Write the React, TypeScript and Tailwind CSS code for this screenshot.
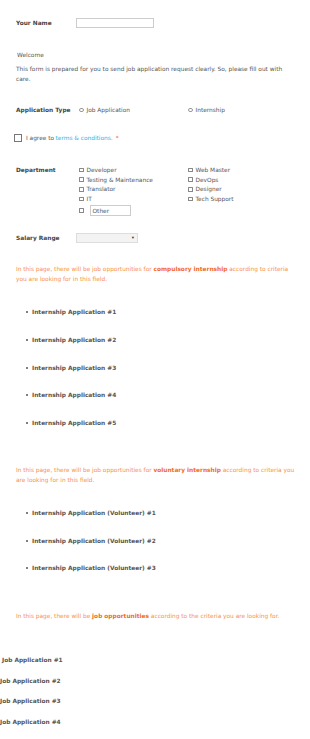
import React from "react";

const Cb = () => (
  <span className="inline-block w-[4.5px] h-[4.5px] border-[0.6px] border-[#888] rounded-[0.5px] mr-[3px] shrink-0" />
);
const Radio = () => (
  <span className="inline-block w-[4.5px] h-[4.5px] border-[0.6px] border-[#999] rounded-full mr-[3px] shrink-0" />
);

export default function App() {
  const depLeft = ["Developer", "Testing & Maintenance", "Translator", "IT"];
  const depRight = ["Web Master", "DevOps", "Designer", "Tech Support"];
  return (
    <div
      className="bg-white w-[310px] min-h-[739px] text-[5.85px] leading-[10px] text-[#555]"
      style={{ fontFamily: '"DejaVu Sans", Verdana, sans-serif' }}
    >
      <div className="pl-4 pt-[18px]">
        <div className="flex items-center h-[10px]">
          <div className="w-[60px] font-bold text-[#444]">Your Name</div>
          <div className="w-[78px] h-[10px] border-[0.6px] border-[#ccc] bg-white" />
        </div>

        <div className="mt-[22px] pl-[1px]">Welcome</div>
        <div className="mt-[4px] pr-3">
          This form is prepared for you to send job application request clearly. So, please fill out with care.
        </div>

        <div className="mt-[21px] flex items-center h-[10px]">
          <div className="w-[63px] font-bold text-[#444]">Application Type</div>
          <div className="w-[109px] flex items-center"><Radio />Job Application</div>
          <div className="flex items-center"><Radio />Internship</div>
        </div>

        <div className="mt-[18px] flex items-center h-[10px] -ml-[2px]">
          <span className="inline-block w-[8px] h-[8px] border-[0.7px] border-[#777] mr-[4px]" />
          <span>I agree to </span>
          <span className="text-[#29b3ea] ml-[1.5px]">terms &amp; conditions.</span>
          <span className="text-[#e53935] ml-[3px]">*</span>
        </div>

        <div className="mt-[22px] flex">
          <div className="w-[63px] font-bold text-[#444] leading-[10px]">Department</div>
          <div className="w-[109px]">
            {depLeft.map((d) => (
              <div key={d} className="flex items-center h-[9.75px]"><Cb />{d}</div>
            ))}
            <div className="flex items-center h-[11px] mt-[1px]">
              <Cb />
              <div className="ml-[3px] w-[41px] h-[11px] border-[0.6px] border-[#ccc] flex items-center pl-[2px]">Other</div>
            </div>
          </div>
          <div>
            {depRight.map((d) => (
              <div key={d} className="flex items-center h-[9.75px]"><Cb />{d}</div>
            ))}
          </div>
        </div>

        <div className="mt-[17px] flex items-center h-[10px]">
          <div className="w-[60px] font-bold text-[#444]">Salary Range</div>
          <div className="w-[62px] h-[10px] border-[0.6px] border-[#ddd] bg-[#f3f3f3] flex items-center justify-end pr-[3px] text-[#333] text-[4.5px]">▾</div>
        </div>

        <div className="mt-[21px] text-[#f7904a] pr-3">
          In this page, there will be job opportunities for <b className="text-[#f26b1d]">compulsory internship</b> according to criteria you are looking for in this field.
        </div>

        <ul className="mt-[23px] pl-[10px] flex flex-col gap-[17.75px] font-bold text-[#555]">
          {[1, 2, 3, 4, 5].map((n) => (
            <li key={n} className="flex items-center h-[10px]">
              <span className="inline-block w-[2px] h-[2px] rounded-full bg-[#555] mr-[4px]" />
              Internship Application #{n}
            </li>
          ))}
        </ul>

        <div className="mt-[37px] text-[#f7904a] pr-3">
          In this page, there will be job opportunities for <b className="text-[#f26b1d]">voluntary internship</b> according to criteria you are looking for in this field.
        </div>

        <ul className="mt-[23px] pl-[10px] flex flex-col gap-[17.5px] font-bold text-[#555]">
          {[1, 2, 3].map((n) => (
            <li key={n} className="flex items-center h-[10px]">
              <span className="inline-block w-[2px] h-[2px] rounded-full bg-[#555] mr-[4px]" />
              Internship Application (Volunteer) #{n}
            </li>
          ))}
        </ul>

        <div className="mt-[38px] text-[#f7904a]">
          In this page, there will be <b className="text-[#f26b1d]">job opportunities</b> according to the criteria you are looking for.
        </div>
      </div>

      <div className="mt-[34px] flex flex-col gap-[10.7px] font-bold text-[#555]">
        <div className="h-[10px] pl-[2px]">Job Application #1</div>
        <div className="h-[10px]">Job Application #2</div>
        <div className="h-[10px]">Job Application #3</div>
        <div className="h-[10px]">Job Application #4</div>
      </div>
    </div>
  );
}
